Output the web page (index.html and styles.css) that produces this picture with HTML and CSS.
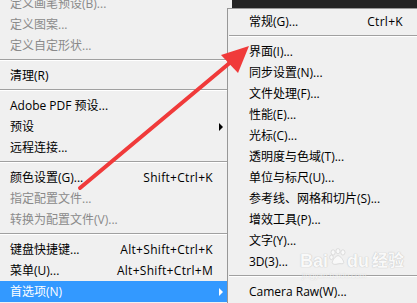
FILE: index.html
```html
<!DOCTYPE html>
<html lang="zh-CN">
<head>
    <meta charset="UTF-8">
    <title>首选项菜单</title>
    <link rel="stylesheet" href="styles.css">
</head>
<body>
    <div class="screen">
        <!-- Edit menu (left) -->
        <ul class="menu main-menu">
            <li class="item disabled">定义画笔预设(B)...</li>
            <li class="item disabled">定义图案...</li>
            <li class="item disabled">定义自定形状...</li>
            <li class="sep"></li>
            <li class="item">清理(R)</li>
            <li class="sep"></li>
            <li class="item">Adobe PDF 预设...</li>
            <li class="item has-sub">预设</li>
            <li class="item">远程连接...</li>
            <li class="sep"></li>
            <li class="item">颜色设置(G)...<span class="key">Shift+Ctrl+K</span></li>
            <li class="item disabled">指定配置文件...</li>
            <li class="item disabled">转换为配置文件(V)...</li>
            <li class="sep"></li>
            <li class="item">键盘快捷键...<span class="key">Alt+Shift+Ctrl+K</span></li>
            <li class="item">菜单(U)...<span class="key">Alt+Shift+Ctrl+M</span></li>
            <li class="item has-sub active">首选项(N)</li>
        </ul>

        <!-- Preferences submenu (right) -->
        <div class="side">
            <div class="topbar"></div>
            <ul class="menu sub-menu">
                <li class="item">常规(G)...<span class="key">Ctrl+K</span></li>
                <li class="sep"></li>
                <li class="item">界面(I)...</li>
                <li class="item">同步设置(N)...</li>
                <li class="item">文件处理(F)...</li>
                <li class="item">性能(E)...</li>
                <li class="item">光标(C)...</li>
                <li class="item">透明度与色域(T)...</li>
                <li class="item">单位与标尺(U)...</li>
                <li class="item">参考线、网格和切片(S)...</li>
                <li class="item">增效工具(P)...</li>
                <li class="item">文字(Y)...</li>
                <li class="item">3D(3)...</li>
                <li class="sep"></li>
                <li class="item">Camera Raw(W)...</li>
            </ul>
        </div>
    </div>

    <!-- annotation arrow -->
    <svg class="arrow" width="417" height="303" viewBox="0 0 417 303">
        <line x1="80" y1="188" x2="232" y2="61" stroke="#f03a3a" stroke-width="4" stroke-linecap="round"/>
        <polygon points="249,46 221,55 238,73" fill="#f03a3a"/>
    </svg>

    <!-- watermark -->
    <div class="watermark">
        <div class="wm-logo">
            <span>Bai</span>
            <svg class="paw" width="18" height="17" viewBox="0 0 22 20">
                <ellipse cx="5" cy="5" rx="2.5" ry="3.2"/>
                <ellipse cx="11" cy="3.5" rx="2.5" ry="3.2"/>
                <ellipse cx="17" cy="5" rx="2.5" ry="3.2"/>
                <ellipse cx="3" cy="11" rx="2.2" ry="2.8"/>
                <path d="M11 9c-3 0-7 6-7 8.5S8 20 11 19s7 1 7-1.5S14 9 11 9z"/>
            </svg>
            <span>du</span>
            <span class="wm-cn">经验</span>
        </div>
        <div class="wm-url">jingyan.baidu.com</div>
    </div>
</body>
</html>
```

FILE: styles.css
```css
* {
    margin: 0;
    padding: 0;
    box-sizing: border-box;
}

body {
    width: 417px;
    height: 303px;
    overflow: hidden;
    position: relative;
    background-color: #f0f0f0;
    font-family: "Open Sans", "Noto Sans CJK SC", sans-serif;
    font-size: 12px;
    color: #000;
}

.screen {
    display: flex;
    height: 303px;
}

.menu {
    list-style: none;
}

.main-menu {
    width: 227px;
    margin-top: -7px;
}

.item {
    position: relative;
    display: flex;
    justify-content: space-between;
    height: 21px;
    line-height: 21px;
    padding-left: 10px;
    padding-right: 14px;
    white-space: nowrap;
}

.key {
    letter-spacing: 0.3px;
}

.item.disabled {
    color: #8a8a8a;
}

.sep {
    height: 9px;
    padding-top: 3px;
}

.sep::before {
    content: "";
    display: block;
    height: 1px;
    background-color: #a0a0a0;
    border-bottom: 1px solid #fff;
    box-sizing: content-box;
}

.has-sub::after {
    content: "";
    position: absolute;
    right: 4px;
    top: 7px;
    border-left: 4px solid #000;
    border-top: 4px solid transparent;
    border-bottom: 4px solid transparent;
}

.item.active {
    background-color: #3399ff;
    color: #fff;
}

.item.active::after {
    border-left-color: #fff;
}

.side {
    flex: 1;
    display: flex;
    flex-direction: column;
}

.topbar {
    height: 8px;
    margin-left: 5px;
    background-color: #232323;
}

.sub-menu {
    flex: 1;
    border-top: 1px solid #979797;
    border-left: 1px solid #979797;
    padding-top: 2px;
    background-color: #f0f0f0;
}

.sub-menu .item {
    padding-left: 21px;
}

.sub-menu .sep {
    padding-left: 1px;
}

.arrow {
    position: absolute;
    left: 0;
    top: 0;
    pointer-events: none;
}

.watermark {
    position: absolute;
    left: 300px;
    top: 248px;
    width: max-content;
    white-space: nowrap;
    pointer-events: none;
    opacity: 0.6;
}

.wm-logo {
    display: flex;
    align-items: flex-end;
    font-family: "Liberation Sans", "Noto Sans CJK SC", sans-serif;
    font-size: 18px;
    font-weight: bold;
    line-height: 20px;
    color: #fff;
    text-shadow: 0 0 1px #aaa, 0 0 1px #aaa;
}

.paw {
    margin: 0 0 6px 1px;
    fill: #fff;
    stroke: #bbb;
    stroke-width: 0.8;
}

.wm-cn {
    margin-left: 3px;
    font-size: 16px;
}

.wm-url {
    font-family: "Liberation Sans", sans-serif;
    font-size: 8px;
    line-height: 10px;
    margin-left: 2px;
    color: #fff;
    text-shadow: 0 0 1px #aaa;
}
```
